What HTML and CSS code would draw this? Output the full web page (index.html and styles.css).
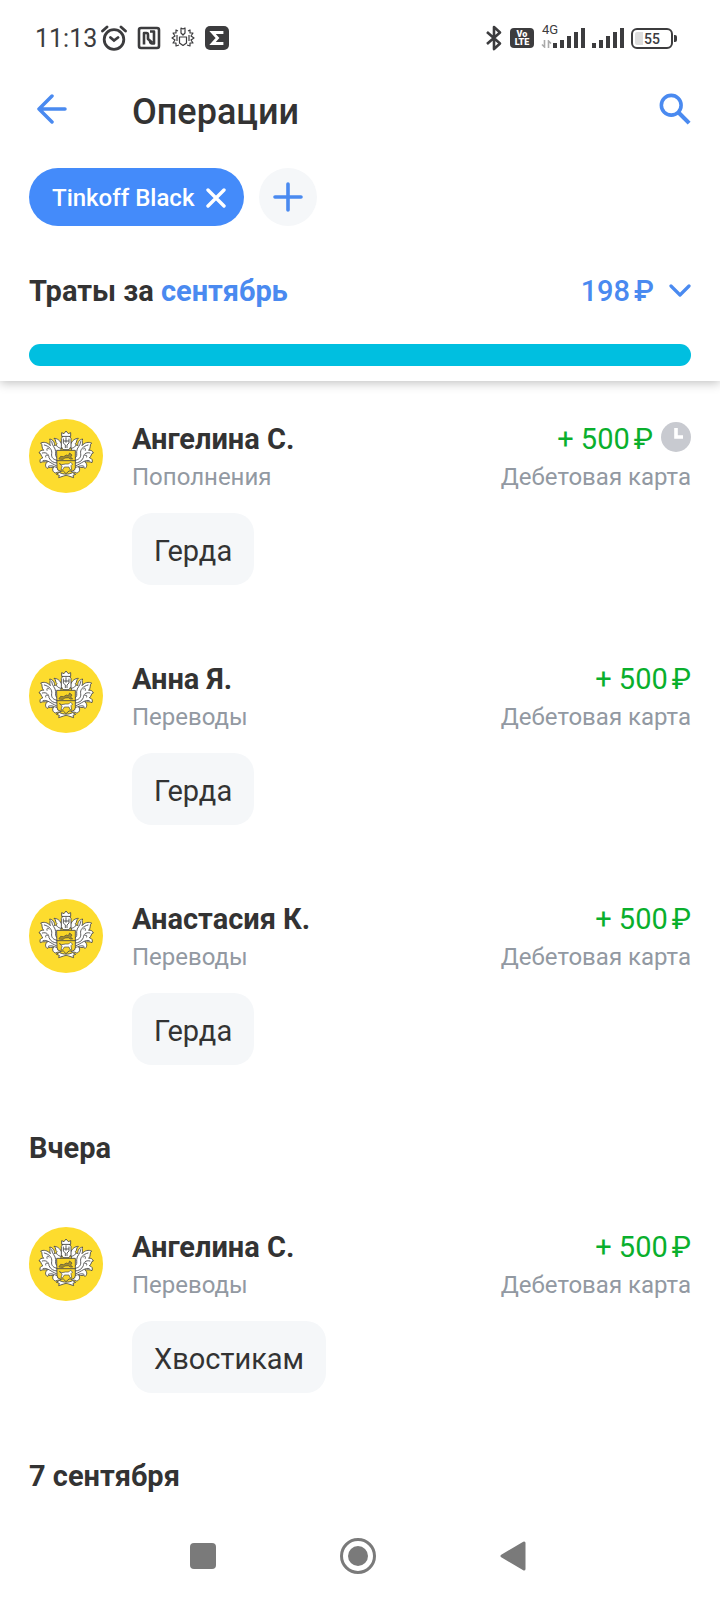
FILE: index.html
```html
<!DOCTYPE html>
<html lang="ru">
<head>
<meta charset="utf-8">
<meta name="viewport" content="width=device-width, initial-scale=1">
<title>Операции</title>
<link rel="stylesheet" href="styles.css">
</head>
<body>
<svg class="sprite" aria-hidden="true">
  <symbol id="crest" viewBox="26 26 222 222">
    <circle cx="137" cy="137" r="111" fill="#fddc2e"/>
    <g fill="#fff" stroke="#454545" stroke-width="2.600" stroke-linejoin="round" stroke-linecap="round">
      <g id="wing">
        <path d="M122 112C116 106 108 102 102 106C104 96 98 88 88 86C92 92 86 98 90 106C82 96 70 94 61 98C68 102 62 112 70 120C64 118 58 122 56 128C64 128 60 138 68 142C60 144 57 150 60 157C68 152 74 156 82 154C74 160 74 168 80 174C88 168 92 174 100 170C94 178 98 186 106 188C112 184 118 186 122 184L114 160Z"/>
        <path d="M72 104C88 108 96 118 94 130C92 142 100 148 110 150M94 94C94 106 106 112 106 124C106 134 104 138 110 142M66 128C80 124 86 134 86 142C90 152 100 158 110 158M68 151C80 146 92 160 108 166M84 168C94 162 104 172 114 172M80 120C78 112 84 112 86 116M76 140C74 134 80 132 82 136" fill="none"/>
        <path d="M124 102C120 90 110 84 101 84C108 88 104 96 110 100C106 104 110 112 122 114Z"/>
      </g>
      <use href="#wing" transform="matrix(-1 0 0 1 275 0)"/>
      <path d="M118 187C131 193 144 193 157 187L166 192L158 195L160 202L145 197C140 195 135 195 130 197L115 202L117 195L109 192Z"/>
      <path d="M123 108V84L129 76H146L152 84V108L146 118H129Z"/>
      <path d="M124 77V67L131 70L137 62L144 70L151 67V77Z"/>
      <path d="M129 86V98L135 104V112M146 86V98L140 104V112M137 82V96M130 92H145" fill="none"/>
      <path d="M110 120H165V172Q165 181 156 182H146L137 190L129 182H119Q110 181 110 172Z" fill="#f9d526"/>
      <path d="M110 151H165" fill="none"/>
      <path d="M116 145L121 138L130 139L138 134L144 136L148 128L155 134L151 140L157 146H150L144 142L133 143L129 147H122Z" fill="#a58f2c" stroke-width="2"/>
      <path d="M118 160L124 163L136 161L145 161L150 156L157 161L152 166L154 178H149L146 170L132 170L127 178H122L125 168Z" stroke-width="2"/>
    </g>
  </symbol>
  <symbol id="signal" viewBox="0 0 32 22">
    <path d="M2 21V16M9 21V13M16 21V9M23 21V5M30 21V1" fill="none" stroke="currentColor" stroke-width="4"/>
  </symbol>
</svg>

<div class="screen">
  <div class="status">
    <div class="status-left">
      <time class="clock">11:13</time>
      <svg width="26" height="26" viewBox="0 0 26 26" fill="none" stroke="currentColor" stroke-width="2.800" stroke-linecap="round"><circle cx="13" cy="14.500" r="9.800"/><path d="M1.500 6L6 2M24.500 6L20 2M9.500 12.500L13 15.500L17 12.500"/></svg>
      <svg width="24" height="24" viewBox="0 0 24 24" fill="none" stroke="currentColor" stroke-width="2.600" stroke-linejoin="round"><rect x="2" y="2" width="20" height="20" rx="2"/><path d="M7 18.500V7H9.500Q11 7 11 9V13L15 16.500M13 5.500H17V17.500H15Q13 17 13 15"/></svg>
      <svg width="24" height="24" viewBox="0 0 24 24" fill="none" stroke="currentColor" stroke-width="1.200" stroke-linejoin="round"><path d="M10 2L12 3L14 2V7L12 9L10 7ZM8.500 11H15.500V17L12 19.500L8.500 17ZM7 5L5 4V7L2 7L4 10L1 12L4 14L2 17L5 17V20L8 19M17 5L19 4V7L22 7L20 10L23 12L20 14L22 17L19 17V20L16 19M6 9V15M18 9V15"/></svg>
      <svg width="24" height="24" viewBox="0 0 24 24"><rect width="24" height="24" rx="5" fill="currentColor"/><path d="M17 8V6.500H7.500L12.500 12L7.500 17.500H17V16" fill="none" stroke="#fff" stroke-width="2.800"/></svg>
    </div>
    <div class="status-right">
      <svg width="18" height="26" viewBox="0 0 18 26" fill="none" stroke="currentColor" stroke-width="2.600" stroke-linejoin="round"><path d="M2 7L15 18.500L9 24V2L15 7.500L2 19"/></svg>
      <span class="volte"><span>Vo</span><span>LTE</span></span>
      <div class="network">
        <span class="gen">4G</span>
        <svg class="arrows" width="11" height="8" viewBox="0 0 11 8" fill="none" stroke="#aaa" stroke-width="1.600"><path d="M3.500 0V7L1 4.500M7.500 8V1L10 3.500"/></svg>
        <svg width="32" height="22"><use href="#signal"/></svg>
      </div>
      <svg width="32" height="22"><use href="#signal"/></svg>
      <div class="battery"><span>55</span></div>
    </div>
  </div>

  <header class="header">
    <div class="topbar">
      <button class="icon-btn back" aria-label="Назад"><svg width="30" height="30" viewBox="0 0 30 30" fill="none" stroke="currentColor" stroke-width="3.500" stroke-linecap="round" stroke-linejoin="round"><path d="M15 2L2 15L15 28M2 15H28"/></svg></button>
      <h1>Операции</h1>
      <button class="icon-btn" aria-label="Поиск"><svg width="32" height="32" viewBox="0 0 34 34" fill="none" stroke="currentColor" stroke-width="3.800"><circle cx="13" cy="13" r="10.500"/><path d="M21 21L32 32" stroke-width="4.400"/></svg></button>
    </div>
    <div class="filters">
      <button class="chip">Tinkoff Black<svg width="20" height="20" viewBox="0 0 20 20" fill="none" stroke="currentColor" stroke-width="3.400" stroke-linecap="round"><path d="M2 2L18 18M18 2L2 18"/></svg></button>
      <button class="add" aria-label="Добавить фильтр"><svg width="30" height="30" viewBox="0 0 30 30" fill="none" stroke="currentColor" stroke-width="3.600" stroke-linecap="round"><path d="M15 2V28M2 15H28"/></svg></button>
    </div>
    <div class="summary">
      <h2>Траты за <a href="#month">сентябрь</a></h2>
      <button class="total">198<span class="rub">₽</span><svg width="22" height="14" viewBox="0 0 22 14" fill="none" stroke="currentColor" stroke-width="3.200" stroke-linecap="round" stroke-linejoin="round"><path d="M2 2L11 11L20 2"/></svg></button>
    </div>
    <div class="bar"></div>
  </header>

  <main>
    <ul class="list">
      <li class="item">
        <svg class="avatar"><use href="#crest"/></svg>
        <div class="who"><h3>Ангелина С.</h3><p>Пополнения</p></div>
        <div class="sum"><div class="amount">+ 500<span class="rub">₽</span><svg class="pending" width="30" height="30" viewBox="0 0 30 30"><circle cx="15" cy="15" r="15" fill="#c8cad0"/><path d="M15 6V15H22" fill="none" stroke="#fff" stroke-width="3.600"/></svg></div><p>Дебетовая карта</p></div>
        <div class="tag">Герда</div>
      </li>
      <li class="item">
        <svg class="avatar"><use href="#crest"/></svg>
        <div class="who"><h3>Анна Я.</h3><p>Переводы</p></div>
        <div class="sum"><div class="amount">+ 500<span class="rub">₽</span></div><p>Дебетовая карта</p></div>
        <div class="tag">Герда</div>
      </li>
      <li class="item">
        <svg class="avatar"><use href="#crest"/></svg>
        <div class="who"><h3>Анастасия К.</h3><p>Переводы</p></div>
        <div class="sum"><div class="amount">+ 500<span class="rub">₽</span></div><p>Дебетовая карта</p></div>
        <div class="tag">Герда</div>
      </li>
    </ul>
    <h2 class="day">Вчера</h2>
    <ul class="list">
      <li class="item">
        <svg class="avatar"><use href="#crest"/></svg>
        <div class="who"><h3>Ангелина С.</h3><p>Переводы</p></div>
        <div class="sum"><div class="amount">+ 500<span class="rub">₽</span></div><p>Дебетовая карта</p></div>
        <div class="tag">Хвостикам</div>
      </li>
    </ul>
    <h2 class="day">7 сентября</h2>
  </main>

  <nav class="sysnav" aria-label="Системная навигация">
    <button aria-label="Последние приложения"><svg width="26" height="26"><rect width="26" height="26" rx="4" fill="currentColor"/></svg></button>
    <button aria-label="Домой"><svg width="36" height="36"><circle cx="18" cy="18" r="16.500" fill="none" stroke="currentColor" stroke-width="3"/><circle cx="18" cy="18" r="10" fill="currentColor"/></svg></button>
    <button aria-label="Назад"><svg width="26" height="30" viewBox="0 0 26 30"><path d="M2 15L24 2V28Z" fill="currentColor" stroke="currentColor" stroke-width="3" stroke-linejoin="round"/></svg></button>
  </nav>
</div>
</body>
</html>
```
FILE: styles.css
```css
* { box-sizing: border-box; margin: 0; padding: 0; }
body { background: #fff; color: #333; font-family: Roboto, "Liberation Sans", sans-serif; }
svg { display: block; flex: none; }
button { border: 0; background: none; font: inherit; color: inherit; cursor: pointer; }
a { color: #4a8af0; text-decoration: none; }
ul { list-style: none; }

.sprite { position: absolute; width: 0; height: 0; }
.screen { display: flex; flex-direction: column; min-height: 100vh; }

.status { display: flex; justify-content: space-between; align-items: center; height: 76px; padding: 0 47px 0 35px; color: #3c3c3e; }
.status-left { display: flex; align-items: center; gap: 10px; }
.clock { padding-top: 2px; font-size: 25px; line-height: 30px; margin-right: -6px; }
.status-right { display: flex; align-items: center; gap: 7px; }
.volte { display: flex; flex-direction: column; align-items: center; width: 24px; height: 20px; padding-top: 2px; border-radius: 4px; background: currentColor; font-size: 9px; line-height: 8px; font-weight: 900; }
.volte span { color: #fff; }
.network { position: relative; display: flex; padding-left: 12px; }
.gen { position: absolute; left: 1px; top: -4px; font-size: 13px; line-height: 14px; }
.arrows { position: absolute; left: 0; bottom: 1px; }
.battery { position: relative; width: 42px; height: 21px; border: 2px solid currentColor; border-radius: 6px; background: linear-gradient(90deg, #ddd 25%, #fff 25%); background-clip: content-box; padding: 2px; font-size: 14px; line-height: 14px; font-weight: 500; text-align: center; }
.battery::after { content: ""; position: absolute; right: -6px; top: 5px; width: 3px; height: 7px; border-radius: 0 2px 2px 0; background: currentColor; }

.header { padding: 8px 29px 15px; background: #fff; box-shadow: 0 2px 10px rgba(0, 0, 0, .25); clip-path: inset(0 0 -20px 0); }
.topbar { display: flex; align-items: center; height: 50px; }
.topbar h1 { flex: 1; padding-top: 6px; font-size: 36px; line-height: 46px; font-weight: 500; }
.icon-btn { color: #4a8af0; }
.back { width: 103px; padding-left: 8px; }
.filters { display: flex; gap: 15px; margin-top: 34px; }
.chip { display: flex; align-items: center; gap: 12px; height: 58px; padding: 2px 18px 0 23px; border-radius: 29px; background: #448bfa; color: #fff; font-size: 24px; font-weight: 500; }
.add { display: flex; align-items: center; justify-content: center; width: 58px; height: 58px; border-radius: 50%; background: #f5f7f9; color: #4a8af0; }
.summary { display: flex; justify-content: space-between; align-items: center; margin: 46px 0 34px; }
.summary h2 { font-size: 29px; line-height: 38px; font-weight: 700; }
.total { display: flex; align-items: center; color: #4a8af0; font-size: 29px; line-height: 38px; font-weight: 500; }
.total svg { margin-left: 15px; }
.rub { margin-left: 4px; }
.bar { height: 22px; border-radius: 11px; background: #00bfe0; }

.item { display: grid; grid-template-columns: 74px 1fr auto; column-gap: 29px; padding: 38px 29px 36px; }
.avatar { width: 74px; height: 74px; }
.item h3, .amount { padding-top: 2px; font-size: 29px; line-height: 36px; }
.item h3 { font-weight: 700; }
.item p { margin-top: 4px; font-size: 24px; line-height: 32px; color: #9299a2; }
.sum { text-align: right; }
.amount { display: flex; justify-content: flex-end; align-items: center; color: #0aaf2d; }
.pending { margin: -4px 0 0 8px; }
.tag { grid-column: 2; justify-self: start; margin-top: 20px; padding: 20px 22px 16px; border-radius: 20px; background: #f5f7f9; font-size: 29px; line-height: 36px; }
.day { padding: 29px 29px 23px; font-size: 29px; line-height: 36px; font-weight: 700; }

.sysnav { display: flex; justify-content: center; align-items: center; gap: 124px; margin-top: auto; padding: 21px 5px 26px 0; color: #7a7a7a; }
```
